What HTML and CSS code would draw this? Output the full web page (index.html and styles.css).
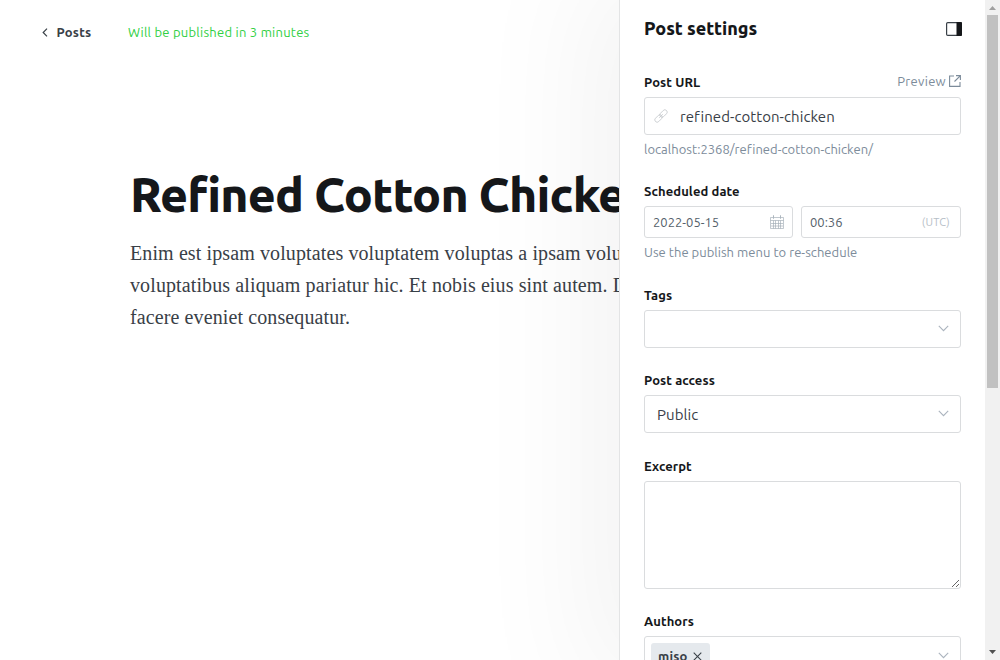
FILE: index.html
```html
<!DOCTYPE html>
<html lang="en">
<head>
<meta charset="utf-8">
<title>Post settings</title>
<link rel="stylesheet" href="styles.css">
</head>
<body>
<div class="app">
  <main class="editor">
    <header class="editor-header">
      <a class="back"><svg width="6" height="9" viewBox="0 0 6 9"><path d="M5 .7 1.2 4.5 5 8.3"/></svg><span>Posts</span></a>
      <span class="status">Will be published in 3 minutes</span>
    </header>
    <article class="post">
      <h1 class="title">Refined Cotton Chicken</h1>
      <p class="body-text">Enim est ipsam voluptates voluptatem voluptas a ipsam volu<br>voluptatibus aliquam pariatur hic. Et nobis eius sint autem. D<br>facere eveniet consequatur.</p>
    </article>
  </main>
  <aside class="settings">
    <div class="settings-header">
      <h2 class="heading">Post settings</h2>
      <svg class="panel-icon" width="16" height="14" viewBox="0 0 16 14"><rect x=".6" y=".6" width="14.8" height="12.8" rx="1.2"/><path d="M10.5 0H15q1 0 1 1v12q0 1-1 1h-4.5z"/></svg>
    </div>
    <section class="group url">
      <div class="label-row"><label class="label">Post URL</label><a class="preview"><span>Preview</span><svg width="12" height="12" viewBox="0 0 12 12"><path d="M5 1H.6v10.4H11V7M7 .6h4.4V5M11.2.8 5.5 6.5"/></svg></a></div>
      <div class="input"><svg class="link" width="14" height="14" viewBox="0 0 14 14"><g transform="rotate(-45 7 7)"><rect x="-.8" y="4.7" width="8.6" height="4.6" rx="2.3"/><rect x="6.2" y="4.7" width="8.6" height="4.6" rx="2.3"/><path d="M4.5 7h5"/></g></svg><span class="slug">refined-cotton-chicken</span></div>
      <p class="hint">localhost:2368/refined-cotton-chicken/</p>
    </section>
    <section class="group date">
      <label class="label">Scheduled date</label>
      <div class="date-row">
        <div class="input small"><span>2022-05-15</span><svg class="calendar" width="14" height="14" viewBox="0 0 14 14"><path d="M.5 2.5h13v11H.5zM.5 5.5h13M3 1.5h1M10 1.5h1M3.5 0v4M10.5 0v4M3.5 5.5v8M5.5 5.5v8M8.5 5.5v8M10.5 5.5v8M1 8.5h12M1 11h12"/></svg></div>
        <div class="input small"><span>00:36</span><span class="utc">(UTC)</span></div>
      </div>
      <p class="hint">Use the publish menu to re-schedule</p>
    </section>
    <section class="group tags">
      <label class="label">Tags</label>
      <div class="input select"><svg class="chevron" width="11" height="7" viewBox="0 0 11 7"><path d="m.8.8 4.7 4.9L10.2.8"/></svg></div>
    </section>
    <section class="group access">
      <label class="label">Post access</label>
      <div class="input select"><span class="public">Public</span><svg class="chevron" width="11" height="7" viewBox="0 0 11 7"><path d="m.8.8 4.7 4.9L10.2.8"/></svg></div>
    </section>
    <section class="group excerpt">
      <label class="label">Excerpt</label>
      <textarea class="textarea"></textarea>
    </section>
    <section class="group authors">
      <label class="label">Authors</label>
      <div class="input select author-input"><span class="token"><span>miso</span><svg width="9" height="9" viewBox="0 0 9 9"><path d="m.7.7 7.6 7.6M8.3.7.7 8.3"/></svg></span><svg class="chevron" width="11" height="7" viewBox="0 0 11 7"><path d="m.8.8 4.7 4.9L10.2.8"/></svg></div>
    </section>
  </aside>
  <div class="scrollbar"><svg width="7" height="4" viewBox="0 0 7 4"><path fill="#a0a0a0" d="M0 4 3.5 0 7 4z"/></svg><div class="thumb"></div><svg width="7" height="4" viewBox="0 0 7 4"><path fill="#505050" d="m0 0 3.5 4L7 0z"/></svg></div>
</div>
</body>
</html>
```
FILE: styles.css
```css
* { box-sizing: border-box; }
body { margin: 0; overflow: hidden; background: #fff; font-family: Ubuntu, "Noto Sans", sans-serif; color: #15171a; }
h1, h2, p { margin: 0; }
svg { display: block; flex: none; fill: none; }
.app { display: grid; grid-template-columns: 619px 366px 15px; height: 660px; overflow: hidden; }
.editor { overflow: hidden; }
.editor-header { display: flex; align-items: center; height: 64px; padding: 0 0 0 42px; font-size: 13px; letter-spacing: .25px; white-space: nowrap; }
.back { display: flex; align-items: center; gap: 8.5px; width: 86px; color: #394047; font-weight: 600; }
.back svg { stroke: #394047; stroke-width: 1.2; }
.status { color: #30cf43; }
.post { padding: 99px 0 0 130px; white-space: nowrap; }
.title { font-size: 48px; line-height: 62px; font-weight: 800; letter-spacing: -.8px; }
.body-text { margin-top: 12px; font: 20px/32px "Liberation Serif", serif; letter-spacing: .11px; color: #394047; }
.settings { position: relative; z-index: 1; height: 660px; clip-path: inset(0 0 0 -200px); background: #fff; border-left: 1px solid #e3e4e5; padding: 0 24px; box-shadow: 0 0 120px 30px rgba(0,0,0,.05); }
.settings-header { display: flex; justify-content: space-between; align-items: center; height: 58px; }
.settings-header, .group { width: 317px; white-space: nowrap; }
.heading { margin-top: -2px; font-size: 18px; line-height: 24px; font-weight: 800; letter-spacing: -.05px; }
.panel-icon { margin-right: -1px; }
.panel-icon rect { stroke: #394047; stroke-width: 1.2; }
.panel-icon path { fill: #15171a; }
.label { display: block; height: 20px; line-height: 20px; font-size: 13px; font-weight: 600; letter-spacing: .1px; margin-bottom: 5px; }
.label-row { display: flex; justify-content: space-between; }
.preview { display: flex; align-items: center; gap: 3px; height: 20px; margin-top: -1px; font-size: 13px; letter-spacing: .3px; color: #7c8b9a; }
.preview svg { stroke: #7c8b9a; stroke-width: 1.1; }
.input { display: flex; align-items: center; height: 38px; padding: 0 12px; border: 1px solid #dadcde; border-radius: 3px; background: #fff; font-size: 15px; letter-spacing: .07px; color: #394047; }
.hint { margin-top: 4px; height: 20px; font-size: 13px; line-height: 20px; letter-spacing: .03px; color: #7c8b9a; }
.url { padding-top: 14px; height: 123px; }
.link { margin: 0 12px 0 -3px; stroke: #c5c9cc; stroke-width: .8; }
.date { height: 104px; }
.date-row { display: grid; grid-template-columns: 149px 160px; gap: 8px; }
.small { height: 32px; justify-content: space-between; padding: 0 8px; font-size: 13px; letter-spacing: 0; color: #54606a; }
.calendar { stroke: #a0abb5; stroke-width: .65; }
.utc { font-size: 11px; letter-spacing: .2px; color: #b6bec7; padding-right: 2px; }
.tags { height: 85px; }
.access { height: 86px; }
.excerpt { height: 155px; }
.select { justify-content: space-between; }
.chevron { margin: -1px -1px 0 auto; stroke: #abb4be; stroke-width: 1.1; }
.textarea { display: block; width: 317px; height: 108px; border: 1px solid #dadcde; border-radius: 3px; background: #fff; outline: 0; resize: vertical; }
.author-input { padding-left: 6px; }
.token { display: flex; align-items: center; gap: 5px; height: 26px; margin-top: 1px; padding: 0 8px 0 7px; border-radius: 3px; background: #e5e9ed; font-size: 13px; font-weight: 600; letter-spacing: .2px; color: #394047; }
.token svg { margin-top: 1px; stroke: #394047; stroke-width: 1.1; }
.author-input .chevron { margin-top: 1px; }
.scrollbar { display: flex; flex-direction: column; align-items: center; background: #f1f1f1; padding: 6px 0; position: relative; z-index: 2; }
.thumb { width: 11px; height: 373px; margin: 5px 0 auto; background: #c1c1c1; }
```
